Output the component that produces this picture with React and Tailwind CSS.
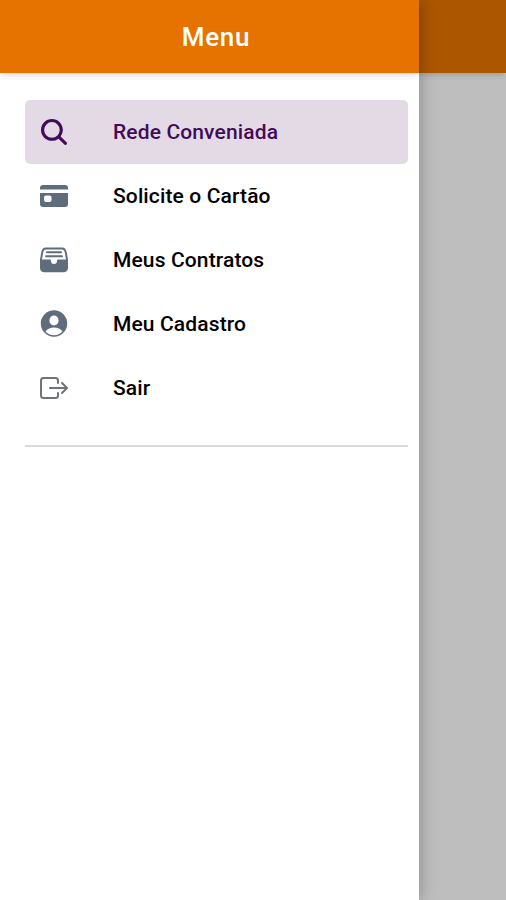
import { IoSearch, IoExitOutline } from "react-icons/io5";

function CardIcon() {
  return (
    <svg viewBox="0 0 32 32" className="size-8" fill="currentColor">
      <path d="M2 9.5V8a3 3 0 0 1 3-3h22a3 3 0 0 1 3 3v1.5z" />
      <path fillRule="evenodd" d="M2 13h28v11a3 3 0 0 1-3 3H5a3 3 0 0 1-3-3zm6 2.500a2 2 0 0 0-2 2v2.500a2 2 0 0 0 2 2h3.500a2 2 0 0 0 2-2v-2.500a2 2 0 0 0-2-2z" />
    </svg>
  );
}

function FileTrayFull() {
  return (
    <svg viewBox="0 0 32 32" className="size-8" fill="currentColor">
      <path fillRule="evenodd" d="M8 3.500h16c3 0 4 1.700 4.700 4.700L30 15.500V24a4.300 4.300 0 0 1-4.300 4.300H6.300A4.300 4.300 0 0 1 2 24v-8.500l1.300-7.300c.6-3 1.700-4.700 4.700-4.700zM8 5.500c-1.700 0-2.400 1-2.800 3L4 15.500h8a1 1 0 0 1 1 1v.5a3 3 0 0 0 6 0v-.5a1 1 0 0 1 1-1h8l-1.200-7c-.4-2-1.100-3-2.800-3z" />
      <path d="M9 7.300h14a.9.900 0 0 1 0 1.900H9a.9.900 0 0 1 0-1.900zM8 11.300h16a.9.900 0 0 1 0 1.900H8a.9.900 0 0 1 0-1.900z" />
    </svg>
  );
}

function PersonIcon() {
  return (
    <svg viewBox="0 0 32 32" className="size-8">
      <circle cx="16" cy="15.500" r="13.200" fill="currentColor" />
      <ellipse cx="16" cy="12.500" rx="4.600" ry="5" fill="white" />
      <path d="M7.500 23.500c1.800-2.700 5-4 8.500-4s6.700 1.300 8.500 4c-2 2.400-5 3.700-8.500 3.700s-6.500-1.300-8.500-3.700z" fill="white" />
    </svg>
  );
}

const items = [
  { label: "Rede Conveniada", icon: <IoSearch className="size-8" />, active: true },
  { label: "Solicite o Cartão", icon: <CardIcon /> },
  { label: "Meus Contratos", icon: <FileTrayFull /> },
  { label: "Meu Cadastro", icon: <PersonIcon /> },
  { label: "Sair", icon: <IoExitOutline className="size-8 text-[#6f747a]" /> },
];

export default function App() {
  return (
    <div className="flex h-[900px] w-[506px] overflow-hidden bg-[#bebebe] font-['Roboto',sans-serif]">
      <aside className="z-10 w-[419px] shrink-0 bg-white shadow-[0_0_16px_rgba(0,0,0,0.3)]">
        <header className="flex h-[72.500px] items-center justify-center bg-[#e67300] pl-[13px] pt-[3px] text-[26px] font-medium tracking-[0.7px] text-white shadow-md">Menu</header>
        <nav className="ml-[25px] mt-[27px] w-[383px] border-b-2 border-[#dadada] pb-[25px]">
          {items.map((i) => (
            <div key={i.label} className={"flex h-16 items-center rounded-[5px] pl-[13px] text-[21px] font-medium tracking-[0.13px] " + (i.active ? "bg-[#e4dae6] text-[#430b57]" : "text-black")}>
              <span className={"w-[75px] " + (i.active ? "text-[#430b57]" : "text-[#5e6c7c]")}>{i.icon}</span>
              <span className="pt-[3px]">{i.label}</span>
            </div>
          ))}
        </nav>
      </aside>
      <main className="grow">
        <div className="h-[72.500px] bg-[#ac5600] shadow-md" />
      </main>
    </div>
  );
}
